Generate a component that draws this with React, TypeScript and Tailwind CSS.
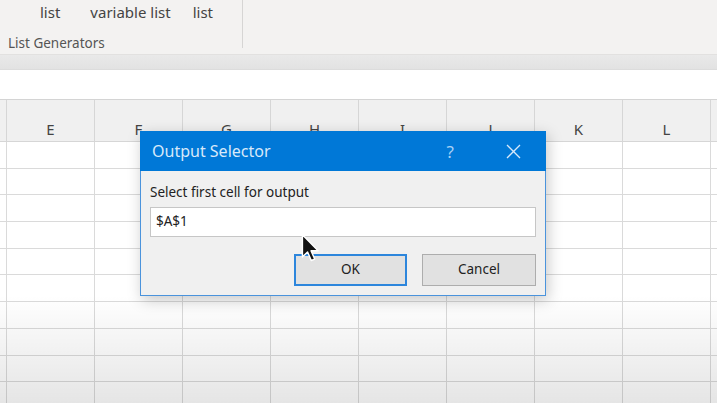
import React from "react";

const cols = ["E", "F", "G", "H", "I", "J", "K", "L", ""];
const rows = Array.from({ length: 10 }, (_, i) => i);

export default function App() {
  return (
    <div
      className="relative w-[717px] h-[403px] overflow-hidden bg-white"
      style={{ fontFamily: '"Noto Sans", "Open Sans", sans-serif' }}
    >
      {/* Ribbon */}
      <div className="h-[55px] bg-[#f3f2f1] flex border-b border-[#e2e1e0]">
        <div className="w-[243px] flex flex-col border-r border-[#d6d5d4] mb-[6px]">
          <div className="flex items-center h-[24px] text-[15px] text-[#444] leading-none">
            <span className="ml-[40px]">list</span>
            <span className="ml-[30px]">variable list</span>
            <span className="ml-[22px]">list</span>
          </div>
          <div className="mt-auto pl-[8px] pb-[-2px] text-[13.5px] text-[#555] leading-none translate-y-[2px]">
            List Generators
          </div>
        </div>
      </div>
      {/* gray band */}
      <div className="h-[15px] bg-gradient-to-b from-[#e9e9e9] to-[#e2e2e2] border-b border-[#dcdcdc]" />
      {/* formula bar */}
      <div className="h-[30px] bg-white border-b border-[#d4d4d4]" />
      {/* Grid */}
      <div className="flex flex-col">
        <div className="flex h-[42px] bg-[#f0f0f0] border-b border-[#d6d6d6]">
          <div className="w-[7px] shrink-0 border-r border-[#d6d6d6]" />
          {cols.map((c, i) => (
            <div
              key={i}
              className="w-[88px] shrink-0 border-r border-[#d6d6d6] flex justify-center pt-[22px] text-[15px] text-[#444] leading-none"
            >
              {c}
            </div>
          ))}
        </div>
        {rows.map((r) => (
          <div key={r} className="flex h-[26.7px] border-b border-[#dadada]">
            <div className="w-[7px] shrink-0 border-r border-[#dadada]" />
            {cols.map((c, i) => (
              <div key={i} className="w-[88px] shrink-0 border-r border-[#dadada]" />
            ))}
          </div>
        ))}
      </div>

      {/* bottom vignette */}
      <div className="pointer-events-none absolute left-0 right-0 top-[295px] bottom-0 bg-gradient-to-b from-transparent to-[rgba(0,0,0,0.1)]" />

      {/* Dialog */}
      <div className="absolute left-[140px] top-[131px] w-[406px] h-[165px] bg-[#f0f0f0] border border-[#4a93dc] shadow-[2px_4px_14px_rgba(0,0,0,0.22)] flex flex-col">
        <div className="h-[40px] -mx-px -mt-px bg-[#0078d7] flex items-center text-[#d8e9fa]">
          <span className="ml-[12px] text-[16px] leading-none">Output Selector</span>
          <span className="ml-auto mr-[52px] text-[17px] leading-none text-[#a9d0f5]">?</span>
          <svg width="15" height="15" viewBox="0 0 15 15" className="mr-[25px]">
            <path d="M1 1 L14 14 M14 1 L1 14" stroke="#d8e9fa" strokeWidth="1.3" fill="none" />
          </svg>
        </div>
        <div className="px-[9px] pt-[15px] flex flex-col">
          <div className="text-[13.5px] text-[#222] leading-none">Select first cell for output</div>
          <div className="mt-[7px] h-[30px] bg-white border border-[#c6c6c6] flex items-center pl-[5px] text-[13.5px] text-[#222]">
            $A$1
          </div>
          <div className="mt-[17px] flex justify-end gap-[15px]">
            <div className="w-[113px] h-[32px] bg-[#e1e1e1] border-2 border-[#2d86dc] flex items-center justify-center text-[13.5px] text-[#222]">
              OK
            </div>
            <div className="w-[114px] h-[32px] bg-[#e1e1e1] border border-[#adadad] flex items-center justify-center text-[13.5px] text-[#222]">
              Cancel
            </div>
          </div>
        </div>
      </div>

      {/* Cursor */}
      <svg
        className="absolute left-[301px] top-[233px]"
        width="20"
        height="30"
        viewBox="0 0 14 20.5"
      >
        <path
          d="M1 1 L1 16.5 L4.6 13 L7.2 19 L9.6 18 L7 12.2 L12 12.2 Z"
          fill="#111"
          stroke="#fff"
          strokeWidth="1"
          strokeLinejoin="round"
        />
      </svg>
    </div>
  );
}
